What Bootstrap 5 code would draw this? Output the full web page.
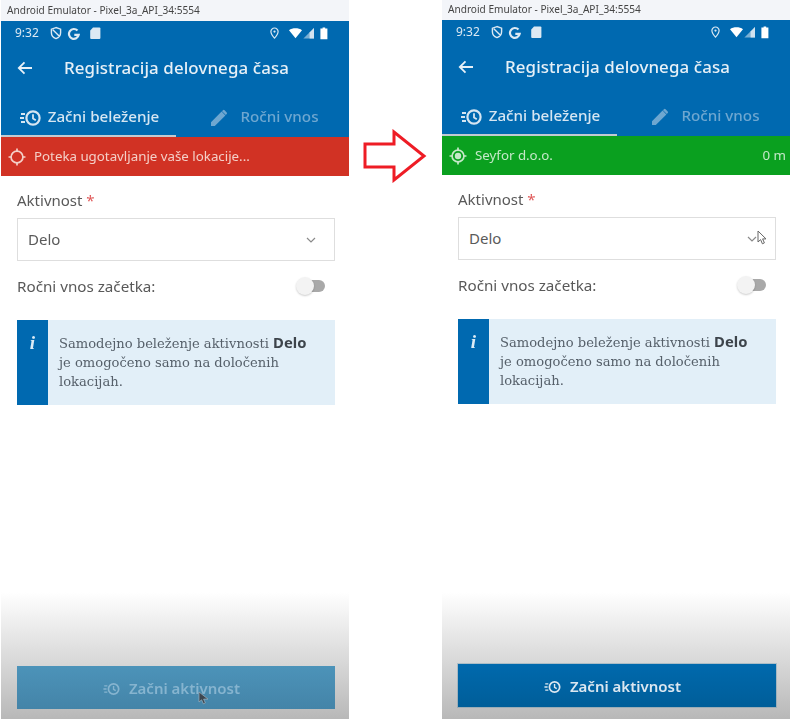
<!DOCTYPE html>
<html lang="sl">
<head>
<meta charset="utf-8">
<title>Registracija delovnega časa</title>
<link href="https://cdn.jsdelivr.net/npm/bootstrap@5.3.0/dist/css/bootstrap.min.css" rel="stylesheet">
<style>
html,body{margin:0;height:719px;overflow:hidden;background:#fff}
body{font-family:"Noto Sans","Open Sans",sans-serif;color:#555}
.stage{width:792px;height:719px}
.phone{width:348px;height:719px;flex:none;background:#fff}
.phone-a{margin-left:1px}
.phone-b{margin-left:93px}
.win-title{background:#f3f5f9;color:#444;font-size:10.1px;padding-left:6px;line-height:20px;height:21px;white-space:nowrap}
.phone-b .win-title{height:20px;line-height:19px}
.appbar{background:#0069b0;color:#fff;height:116px}
.status{height:23px;padding:0 0 0 14px;font-size:12px;color:#dce9f3}
.status svg{display:block}
.st-l{margin-left:10px}
.st-r{margin-left:auto;margin-right:19px}
.titlebar{height:48px;padding-left:16px}
.titlebar h1{font-size:16.9px;font-weight:500;margin:0 0 0 31px;color:#e6f0f7;letter-spacing:.1px}
.tabs{height:45px}
.tab{width:175px;height:45px;font-size:15.2px;font-weight:500;color:#d6e6f2;padding-top:13px}
.tab.off{width:173px;color:#6ea7d0;padding-left:4px}
.tab.on{border-bottom:2.5px solid #c2cad1;padding-left:2px;gap:6px}
.locbar{height:39px;padding:0 4px 0 7px;font-size:13.3px;color:#f4cfc7}
.locbar.red{background:#d13224}
.locbar.green{background:#0aa01f;color:#c4e8c8;padding-right:4px}
.content{padding:14px 14px 0 16px}
.fld-label{font-size:15px;line-height:20px;color:#595959;margin-bottom:8px}
.req{color:#e05a5a}
.pick{height:43px;border:1.5px solid #dedede;background:#fff;padding:0 18px 0 10px;font-size:15px;color:#5a5a5a}
.switch-row{height:50px;font-size:15.2px;color:#595959}
.sw{width:30px;height:20px;margin-right:9px}
.sw-track{width:26px;height:12px;background:#a9a9a9;border-radius:6px;top:4px;left:3px}
.sw-knob{width:18px;height:18px;background:#f3f3f3;border-radius:50%;top:1px;left:0;box-shadow:0 1px 2px rgba(0,0,0,.2)}
.info{height:85px;background:#e2eff8;margin-top:9px}
.info-side{width:31px;background:#0069b0;color:#dcecf6;font-family:"Liberation Serif",serif;font-style:italic;font-weight:700;font-size:19px;padding-top:9px}
.info-text{font-family:"DejaVu Serif",serif;font-size:13.1px;line-height:19px;color:#56606a;padding:12.5px 0 0 11px;white-space:nowrap}
.info-text b{font-family:"Noto Sans",sans-serif;font-weight:700;color:#3d444b;font-size:14.8px}
.foot{height:127px;margin-top:auto;background:linear-gradient(#fff,#b8b8b8);padding:74px 14px 0 16px}
.phone-b .foot{padding-top:72px}
.go{width:100%;height:43px;border-radius:0;border:0;background:linear-gradient(#0069ad,#005e99);color:#dbe7f0;font-size:15px;font-weight:600;box-shadow:0 0 0 1px rgba(90,140,170,.35);padding:8px 21px 6px 12px}
.go:disabled{background:linear-gradient(#4c93b9,#4484a8);color:#86b4cf;opacity:1;box-shadow:none}
.cursor-a{left:197px;top:99px}
.cursor-b{right:7px;top:12px}
.arrow-box{left:362px;top:129px}
.soft{filter:blur(.35px)}
</style>
</head>
<body>
<div class="stage d-flex position-relative">
  <svg width="0" height="0" class="position-absolute">
    <defs>
      <symbol id="ic-hist" viewBox="0 0 22 18">
        <path d="M1 5h4M0 9h4M1 13h4" stroke="currentColor" stroke-width="1.8" fill="none"/>
        <circle cx="13" cy="9" r="6.6" stroke="currentColor" stroke-width="2.2" fill="none"/>
        <path d="M13 5.2V9.4l2.8 1.8" stroke="currentColor" stroke-width="1.8" fill="none"/>
      </symbol>
      <symbol id="ic-pen" viewBox="0 0 18 18">
        <path d="M1 17v-3.8L11.6 2.6l3.8 3.8L4.8 17zM12.9 1.3a1.2 1.2 0 0 1 1.7 0l2.1 2.1a1.2 1.2 0 0 1 0 1.7l-.9.9-3.8-3.8z" fill="currentColor"/>
      </symbol>
      <symbol id="ic-status" viewBox="0 0 60 14">
        <path d="M7 1.6 2.4 3.2v3.6c0 2.8 2 5 4.6 5.8 2.6-.8 4.6-3 4.6-5.8V3.2zM3.8 3.8l6.6 6.4" stroke="currentColor" stroke-width="1.4" fill="none"/>
        <path d="M32.5 5.6a4.9 4.9 0 1 0 1.2 4.2h-4.4" stroke="currentColor" stroke-width="2.2" fill="none" transform="translate(-4 -1)"/>
        <path d="M44 1.5h6.4a1 1 0 0 1 1 1V12a1 1 0 0 1-1 1h-8.2a1 1 0 0 1-1-1V4.4z" fill="currentColor"/>
      </symbol>
      <symbol id="ic-status-r" viewBox="0 0 62 14">
        <path d="M6.5 2a3.6 3.6 0 0 0-3.6 3.6c0 2.8 3.6 6.6 3.6 6.6s3.6-3.8 3.6-6.6A3.6 3.6 0 0 0 6.5 2z" stroke="currentColor" stroke-width="1.2" fill="none"/>
        <circle cx="6.5" cy="5.6" r="1.1" fill="currentColor"/>
        <path d="M21 4.2c3.4-2.6 9.6-2.6 13 0l-6.5 8z" fill="#fff"/>
        <path d="M46 2v10.6H35.4z" fill="currentColor" opacity=".55"/>
        <path d="M46 2v10.6h-4.4V6.4z" fill="currentColor" opacity=".9"/>
        <path d="M52.4 2.4h2.2v-1h2.6v1h2.2v10.8h-7z" fill="#fff"/>
      </symbol>
      <symbol id="ic-loc" viewBox="0 0 20 20">
        <circle cx="10" cy="10" r="6.6" stroke="currentColor" stroke-width="1.9" fill="none"/>
        <path d="M10 0.6v3M10 16.4v3M0.6 10h3M16.4 10h3" stroke="currentColor" stroke-width="1.9"/>
      </symbol>
    </defs>
  </svg>

  <div class="phone phone-a d-flex flex-column">
    <div class="win-title soft">Android Emulator - Pixel_3a_API_34:5554</div>
    <div class="appbar soft">
      <div class="status d-flex align-items-center">
        <span>9:32</span>
        <svg class="st-l" width="60" height="14"><use href="#ic-status"/></svg>
        <svg class="st-r" width="62" height="14"><use href="#ic-status-r"/></svg>
      </div>
      <div class="titlebar d-flex align-items-center">
        <svg width="16" height="14" viewBox="0 0 16 14"><path d="M15 7H2M7.5 1.4 1.8 7l5.7 5.6" stroke="#e6f0f7" stroke-width="1.8" fill="none"/></svg>
        <h1>Registracija delovnega časa</h1>
      </div>
      <div class="tabs d-flex">
        <div class="tab on d-flex align-items-start justify-content-center"><svg class="mt-1" width="22" height="18"><use href="#ic-hist"/></svg><span>Začni beleženje</span></div>
        <div class="tab off d-flex align-items-start justify-content-center gap-2"><svg class="mt-1" width="18" height="18"><use href="#ic-pen"/></svg><span class="ms-1">Ročni vnos</span></div>
      </div>
    </div>
    <div class="locbar red soft d-flex align-items-center gap-2"><svg width="18" height="18"><use href="#ic-loc"/></svg><span>Poteka ugotavljanje vaše lokacije...</span></div>
    <div class="content soft">
      <div class="fld-label">Aktivnost <span class="req">*</span></div>
      <div class="pick d-flex align-items-center justify-content-between"><span>Delo</span><svg width="10" height="6" viewBox="0 0 10 6"><path d="M1 1l4 4 4-4" stroke="#8a8a8a" stroke-width="1.2" fill="none"/></svg></div>
      <div class="switch-row d-flex align-items-center justify-content-between"><span>Ročni vnos začetka:</span><div class="sw position-relative"><div class="sw-track position-absolute"></div><div class="sw-knob position-absolute"></div></div></div>
      <div class="info d-flex"><div class="info-side text-center">i</div><div class="info-text">Samodejno beleženje aktivnosti <b>Delo</b><br>je omogočeno samo na določenih<br>lokacijah.</div></div>
    </div>
    <div class="foot position-relative soft">
      <button class="go btn d-flex align-items-center justify-content-center gap-2" disabled><svg width="18" height="14"><use href="#ic-hist"/></svg><span>Začni aktivnost</span></button>
      <svg class="position-absolute cursor-a" width="12" height="14" viewBox="0 0 12 14"><path d="M1 1v10l2.6-2.2 1.8 4 2-.9-1.8-3.8H10z" fill="#3c4650" stroke="#9fb3c0" stroke-width=".7"/></svg>
    </div>
  </div>

  <svg class="position-absolute arrow-box" width="66" height="54" viewBox="0 0 66 54"><path d="M3 15h29V3l30 24-30 24V38H3z" fill="#fff" stroke="#ee1c25" stroke-width="3"/></svg>

  <div class="phone phone-b d-flex flex-column">
    <div class="win-title soft">Android Emulator - Pixel_3a_API_34:5554</div>
    <div class="appbar soft">
      <div class="status d-flex align-items-center">
        <span>9:32</span>
        <svg class="st-l" width="60" height="14"><use href="#ic-status"/></svg>
        <svg class="st-r" width="62" height="14"><use href="#ic-status-r"/></svg>
      </div>
      <div class="titlebar d-flex align-items-center">
        <svg width="16" height="14" viewBox="0 0 16 14"><path d="M15 7H2M7.5 1.4 1.8 7l5.7 5.6" stroke="#e6f0f7" stroke-width="1.8" fill="none"/></svg>
        <h1>Registracija delovnega časa</h1>
      </div>
      <div class="tabs d-flex">
        <div class="tab on d-flex align-items-start justify-content-center"><svg class="mt-1" width="22" height="18"><use href="#ic-hist"/></svg><span>Začni beleženje</span></div>
        <div class="tab off d-flex align-items-start justify-content-center gap-2"><svg class="mt-1" width="18" height="18"><use href="#ic-pen"/></svg><span class="ms-1">Ročni vnos</span></div>
      </div>
    </div>
    <div class="locbar green soft d-flex align-items-center gap-2"><svg width="18" height="18"><use href="#ic-loc"/><circle cx="9" cy="9" r="3.2" fill="currentColor"/></svg><span>Seyfor d.o.o.</span><span class="ms-auto">0 m</span></div>
    <div class="content soft">
      <div class="fld-label">Aktivnost <span class="req">*</span></div>
      <div class="pick d-flex align-items-center justify-content-between position-relative"><span>Delo</span><svg width="10" height="6" viewBox="0 0 10 6"><path d="M1 1l4 4 4-4" stroke="#8a8a8a" stroke-width="1.2" fill="none"/></svg><svg class="position-absolute cursor-b" width="12" height="16" viewBox="0 0 12 16"><path d="M2 1v11l2.6-2.4 1.8 4.2 2-.9-1.8-4H10z" fill="#fff" stroke="#666" stroke-width="1"/></svg></div>
      <div class="switch-row d-flex align-items-center justify-content-between"><span>Ročni vnos začetka:</span><div class="sw position-relative"><div class="sw-track position-absolute"></div><div class="sw-knob position-absolute"></div></div></div>
      <div class="info d-flex"><div class="info-side text-center">i</div><div class="info-text">Samodejno beleženje aktivnosti <b>Delo</b><br>je omogočeno samo na določenih<br>lokacijah.</div></div>
    </div>
    <div class="foot soft">
      <button class="go btn d-flex align-items-center justify-content-center gap-2"><svg width="18" height="14"><use href="#ic-hist"/></svg><span>Začni aktivnost</span></button>
    </div>
  </div>
</div>
</body>
</html>
